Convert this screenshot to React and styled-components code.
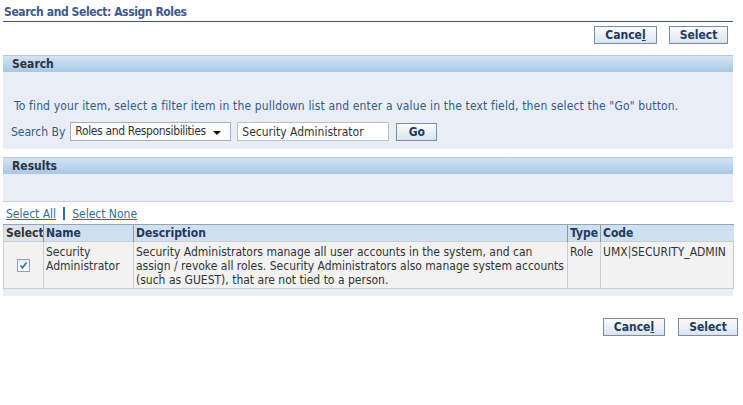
import React from "react";
import styled, { createGlobalStyle } from "styled-components";

const GlobalStyle = createGlobalStyle`
  body {
    margin: 0;
    background: #ffffff;
    font-family: "DejaVu Sans Condensed", "Liberation Sans", sans-serif;
    font-size: 12px;
    color: #333333;
  }
`;

const Page = styled.div`
  padding: 5px 0 0 3px;
  width: 740px;
`;

const Title = styled.h1`
  margin: 0;
  width: 730px;
  height: 17px;
  padding-left: 1px;
  box-sizing: border-box;
  border-bottom: 1px solid #3c5a8c;
  font-size: 12px;
  font-weight: bold;
  line-height: 14px;
  letter-spacing: -0.4px;
  color: #3c5a8c;
`;

const ButtonBar = styled.div`
  display: flex;
  justify-content: flex-end;
  gap: ${(p) => p.$gap}px;
  width: ${(p) => p.$width}px;
  margin-top: ${(p) => p.$top}px;
`;

const Button = styled.button`
  height: 18px;
  width: ${(p) => p.$width}px;
  padding: 0;
  border: 1px solid #7d8ba0;
  background: linear-gradient(#fbfcfe, #d9e4f0);
  font-family: inherit;
  font-size: 12px;
  font-weight: bold;
  color: #23395b;
  line-height: 16px;
  cursor: pointer;

  u {
    text-decoration: underline;
  }
`;

const Section = styled.section`
  width: 730px;
  margin-top: ${(p) => p.$top}px;
`;

const SectionHeader = styled.div`
  height: 16px;
  padding-left: 9px;
  border-top: 1px solid #b3c9e2;
  background: linear-gradient(#d3e3f3, #a9c7e6);
  font-weight: bold;
  font-size: 12px;
  line-height: 16px;
  color: #2b3440;
`;

const SearchBody = styled.div`
  background: #e9eef6;
  padding: 27px 0 8px 8px;
  color: #355a85;
`;

const Instruction = styled.p`
  margin: 0 0 9px 3px;
  line-height: 14px;
  letter-spacing: 0.15px;
`;

const SearchRow = styled.div`
  display: flex;
  align-items: center;
  gap: 6px;
`;

const Label = styled.span`
  margin-right: -1px;
`;

const Dropdown = styled.div`
  position: relative;
  width: 161px;
  height: 19px;
  box-sizing: border-box;
  border: 1px solid #a7afbb;
  background: #ffffff;
  padding-left: 4px;
  line-height: 17px;
  letter-spacing: -0.35px;
  color: #333333;
  white-space: nowrap;
  overflow: hidden;

  &::after {
    content: "";
    position: absolute;
    right: 9px;
    top: 8px;
    border-left: 4px solid transparent;
    border-right: 4px solid transparent;
    border-top: 4px solid #111111;
  }
`;

const TextInput = styled.input`
  width: 152px;
  height: 19px;
  box-sizing: border-box;
  border: 1px solid #b9c0ca;
  padding: 0 4px;
  font-family: inherit;
  font-size: 12px;
  color: #333333;
  margin-right: 1px;
`;

const ResultsBand = styled.div`
  height: 27px;
  background: #e9eef6;
  border-bottom: 1px solid #c9d1dc;
`;

const LinkBar = styled.div`
  display: flex;
  align-items: center;
  height: 21px;
  padding: 1px 0 0 3px;
  gap: 7px;
`;

const Link = styled.a`
  color: #2d6ea5;
  text-decoration: underline;
  cursor: pointer;
`;

const Divider = styled.span`
  width: 2px;
  height: 13px;
  background: #2d6ea5;
`;

const Table = styled.table`
  width: 730px;
  border-collapse: collapse;
  table-layout: fixed;
`;

const Th = styled.th`
  height: 16px;
  padding: 0 0 0 2px;
  text-align: left;
  font-size: 12px;
  font-weight: bold;
  background: ${(p) => (p.$plain ? "#dbe3ec" : "#cfe0f1")};
  color: ${(p) => (p.$plain ? "#333333" : "#23395b")};
  border-top: 1px solid #9aa3ad;
  border-left: 1px solid ${(p) => (p.$plain ? "#c9cfd8" : "#8f979f")};
  line-height: 16px;
  white-space: nowrap;
  overflow: hidden;
`;

const Td = styled.td`
  vertical-align: top;
  padding: 3px 3px 1px 2px;
  background: #f2f2f2;
  border: 1px solid #c9cdd3;
  line-height: 14px;
  text-align: ${(p) => (p.$center ? "center" : "left")};
  white-space: ${(p) => (p.$nowrap ? "nowrap" : "normal")};
  overflow: hidden;
`;

const Pipe = styled.span`
  color: #8a3a6a;
`;

const CheckBox = styled.span`
  display: inline-flex;
  align-items: center;
  justify-content: center;
  width: 11px;
  height: 11px;
  margin-top: 14px;
  margin-left: 1px;
  border: 1px solid #8aa0bc;
  background: linear-gradient(#e6ebf2, #ffffff);
`;

const BottomBand = styled.div`
  height: 7px;
  background: #e9eef6;
`;

function Check() {
  return (
    <svg width="9" height="9" viewBox="0 0 9 9">
      <path d="M1.5 4.5 L3.5 6.8 L7.5 1.5" fill="none" stroke="#4a6ea8" strokeWidth="1.7" />
    </svg>
  );
}

function Actions({ width, top, gap, cancelWidth, selectWidth }) {
  return (
    <ButtonBar $width={width} $top={top} $gap={gap}>
      <Button $width={cancelWidth}>
        Cance<u>l</u>
      </Button>
      <Button $width={selectWidth}>Select</Button>
    </ButtonBar>
  );
}

export default function App() {
  return (
    <>
      <GlobalStyle />
      <Page>
        <Title>Search and Select: Assign Roles</Title>
        <Actions width={725} top={4} gap={12} cancelWidth={63} selectWidth={59} />

        <Section $top={11}>
          <SectionHeader>Search</SectionHeader>
          <SearchBody>
            <Instruction>
              To find your item, select a filter item in the pulldown list and enter a value in the
              text field, then select the "Go" button.
            </Instruction>
            <SearchRow>
              <Label>Search By</Label>
              <Dropdown>Roles and Responsibilities</Dropdown>
              <TextInput readOnly value="Security Administrator" />
              <Button $width={41}>Go</Button>
            </SearchRow>
          </SearchBody>
        </Section>

        <Section $top={8}>
          <SectionHeader>Results</SectionHeader>
          <ResultsBand />
          <LinkBar>
            <Link>Select All</Link>
            <Divider />
            <Link>Select None</Link>
          </LinkBar>
          <Table>
            <colgroup>
              <col style={{ width: 40 }} />
              <col style={{ width: 90 }} />
              <col style={{ width: 434 }} />
              <col style={{ width: 33 }} />
              <col style={{ width: 133 }} />
            </colgroup>
            <thead>
              <tr>
                <Th $plain>Select</Th>
                <Th>Name</Th>
                <Th>Description</Th>
                <Th>Type</Th>
                <Th>Code</Th>
              </tr>
            </thead>
            <tbody>
              <tr>
                <Td $center>
                  <CheckBox>
                    <Check />
                  </CheckBox>
                </Td>
                <Td>Security Administrator</Td>
                <Td>
                  Security Administrators manage all user accounts in the system, and can assign /
                  revoke all roles. Security Administrators also manage system accounts (such as
                  GUEST), that are not tied to a person.
                </Td>
                <Td>Role</Td>
                <Td $nowrap>
                  UMX<Pipe>|</Pipe>SECURITY_ADMIN
                </Td>
              </tr>
            </tbody>
          </Table>
          <BottomBand />
        </Section>

        <Actions width={735} top={22} gap={13} cancelWidth={62} selectWidth={60} />
      </Page>
    </>
  );
}
